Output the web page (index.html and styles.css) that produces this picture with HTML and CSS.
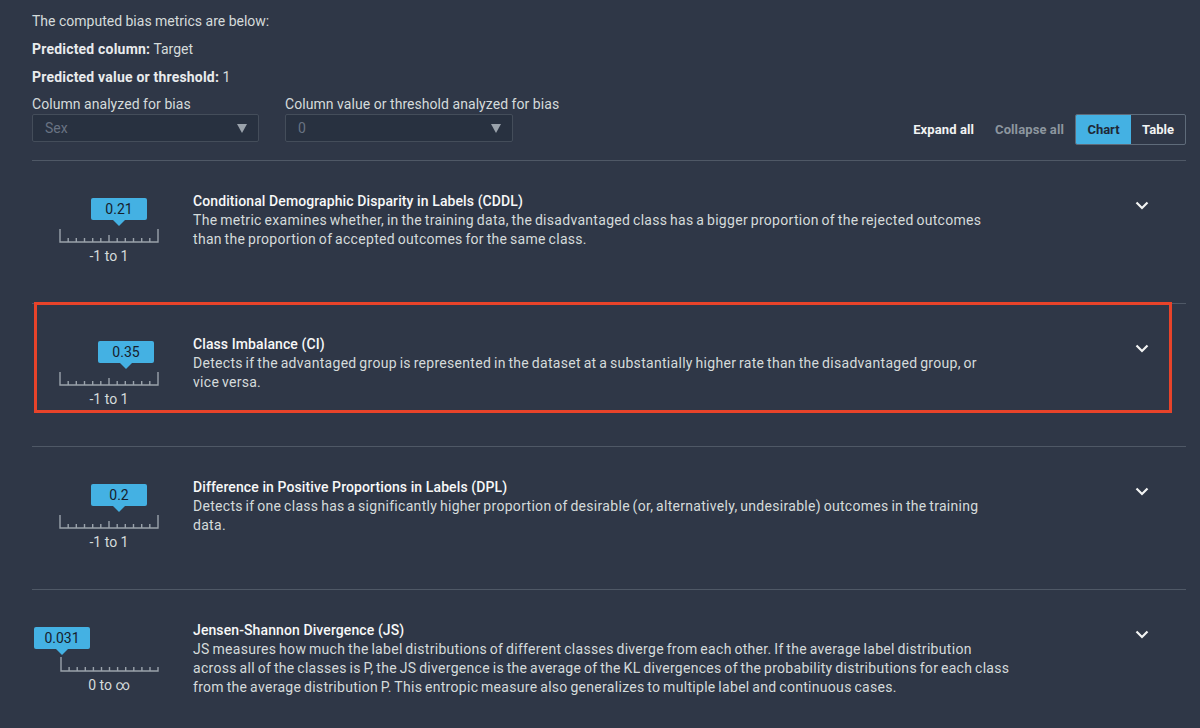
FILE: index.html
```html
<!DOCTYPE html>
<html lang="en">
<head>
<meta charset="utf-8">
<title>Bias metrics</title>
<link rel="stylesheet" href="styles.css">
</head>
<body>
<div class="page">
  <p class="intro">The computed bias metrics are below:</p>
  <p class="intro"><b>Predicted column:</b> Target</p>
  <p class="intro"><b>Predicted value or threshold:</b> 1</p>

  <div class="filters">
    <div class="field">
      <label class="field-label">Column analyzed for bias</label>
      <div class="select select-a"><span>Sex</span><span class="caret"></span></div>
    </div>
    <div class="field">
      <label class="field-label">Column value or threshold analyzed for bias</label>
      <div class="select select-b"><span>0</span><span class="caret"></span></div>
    </div>
    <div class="controls">
      <span class="link link-on">Expand all</span>
      <span class="link link-off">Collapse all</span>
      <div class="segmented">
        <span class="seg seg-active">Chart</span>
        <span class="seg">Table</span>
      </div>
    </div>
  </div>

  <div class="rows">
    <div class="row">
      <div class="chart">
        <div class="gauge">
          <div class="callout" style="left: 60px">0.21</div>
          <svg class="scale" width="100" height="15" viewBox="0 0 100 15">
            <path d="M1 1V14H99V1M9.2 10V14M17.3 10V14M25.5 10V14M33.7 10V14M41.8 10V14M50 7V14M58.2 10V14M66.3 10V14M74.5 10V14M82.7 10V14M90.8 10V14" fill="none" stroke="#9aa2ab" stroke-width="1.4"/>
          </svg>
        </div>
        <div class="range">-1 to 1</div>
      </div>
      <div class="text">
        <div class="title">Conditional Demographic Disparity in Labels (CDDL)</div>
        <div class="desc">The metric examines whether, in the training data, the disadvantaged class has a bigger proportion of the rejected outcomes than the proportion of accepted outcomes for the same class.</div>
      </div>
      <svg class="chev" width="14" height="9" viewBox="0 0 14 9"><path d="M1.5 1.5L7 7L12.5 1.5" fill="none" stroke="#f2f3f3" stroke-width="2.2"/></svg>
    </div>

    <div class="row">
      <div class="highlight"></div>
      <div class="chart">
        <div class="gauge">
          <div class="callout" style="left: 67px">0.35</div>
          <svg class="scale" width="100" height="15" viewBox="0 0 100 15">
            <path d="M1 1V14H99V1M9.2 10V14M17.3 10V14M25.5 10V14M33.7 10V14M41.8 10V14M50 7V14M58.2 10V14M66.3 10V14M74.5 10V14M82.7 10V14M90.8 10V14" fill="none" stroke="#9aa2ab" stroke-width="1.4"/>
          </svg>
        </div>
        <div class="range">-1 to 1</div>
      </div>
      <div class="text">
        <div class="title">Class Imbalance (CI)</div>
        <div class="desc">Detects if the advantaged group is represented in the dataset at a substantially higher rate than the disadvantaged group, or vice&nbsp;versa.</div>
      </div>
      <svg class="chev" width="14" height="9" viewBox="0 0 14 9"><path d="M1.5 1.5L7 7L12.5 1.5" fill="none" stroke="#f2f3f3" stroke-width="2.2"/></svg>
    </div>

    <div class="row">
      <div class="chart">
        <div class="gauge">
          <div class="callout" style="left: 60px">0.2</div>
          <svg class="scale" width="100" height="15" viewBox="0 0 100 15">
            <path d="M1 1V14H99V1M9.2 10V14M17.3 10V14M25.5 10V14M33.7 10V14M41.8 10V14M50 7V14M58.2 10V14M66.3 10V14M74.5 10V14M82.7 10V14M90.8 10V14" fill="none" stroke="#9aa2ab" stroke-width="1.4"/>
          </svg>
        </div>
        <div class="range">-1 to 1</div>
      </div>
      <div class="text">
        <div class="title">Difference in Positive Proportions in Labels (DPL)</div>
        <div class="desc">Detects if one class has a significantly higher proportion of desirable (or, alternatively, undesirable) outcomes in the training data.</div>
      </div>
      <svg class="chev" width="14" height="9" viewBox="0 0 14 9"><path d="M1.5 1.5L7 7L12.5 1.5" fill="none" stroke="#f2f3f3" stroke-width="2.2"/></svg>
    </div>

    <div class="row">
      <div class="chart">
        <div class="gauge">
          <div class="callout" style="left: 3px">0.031</div>
          <svg class="scale" width="100" height="15" viewBox="0 0 100 15">
            <path d="M2 0V14H99V10M10.1 10V14M18.2 10V14M26.3 10V14M34.4 10V14M42.5 10V14M50.5 10V14M58.6 10V14M66.7 10V14M74.8 10V14M82.9 10V14M91 10V14" fill="none" stroke="#9aa2ab" stroke-width="1.4"/>
          </svg>
        </div>
        <div class="range">0 to ∞</div>
      </div>
      <div class="text">
        <div class="title">Jensen-Shannon Divergence (JS)</div>
        <div class="desc">JS measures how much the label distributions of different classes diverge from each other. If the average label distribution across all of the classes is P, the JS divergence is the average of the KL divergences of the probability distributions for each class from the average distribution P. This entropic measure also generalizes to multiple label and continuous cases.</div>
      </div>
      <svg class="chev" width="14" height="9" viewBox="0 0 14 9"><path d="M1.5 1.5L7 7L12.5 1.5" fill="none" stroke="#f2f3f3" stroke-width="2.2"/></svg>
    </div>
  </div>
</div>
</body>
</html>
```

FILE: styles.css
```css
* { box-sizing: border-box; }
html, body {
  margin: 0;
  background: #2f3747;
  height: 100%;
  overflow: hidden;
}
body {
  font-family: Roboto, "Liberation Sans", sans-serif;
  font-size: 14px;
  color: #d5dbdb;
}
.page {
  padding: 11px 14px 0 32px;
}
.intro {
  margin: 0 0 8px;
  line-height: 20px;
}
.intro b {
  font-weight: 700;
  letter-spacing: 0.2px;
  color: #e9ebed;
}
.filters {
  display: flex;
  align-items: flex-end;
  margin-top: -1px;
}
.field {
  display: flex;
  flex-direction: column;
  margin-right: 26px;
}
.field-label {
  line-height: 20px;
  letter-spacing: 0.05px;
}
.select {
  height: 28px;
  background: #283140;
  border: 1px solid #444d5a;
  border-radius: 2px;
  display: flex;
  align-items: center;
  justify-content: space-between;
  padding: 0 11px 0 12px;
  color: #687383;
  margin-bottom: 3px;
}
.select-a { width: 227px; }
.select-b { width: 228px; }
.caret {
  width: 0;
  height: 0;
  border-left: 5px solid transparent;
  border-right: 5px solid transparent;
  border-top: 9px solid #9aa2ab;
}
.controls {
  margin-left: auto;
  display: flex;
  align-items: center;
  font-size: 13px;
}
.link {
  font-weight: 700;
  line-height: 20px;
  letter-spacing: 0.1px;
}
.link-on { color: #f2f3f3; margin-right: 21px; }
.link-off { color: #8d969f; margin-right: 11px; }
.segmented {
  display: flex;
  height: 31px;
  border: 1px solid #5f6b7a;
  border-radius: 2px;
  overflow: hidden;
}
.seg {
  display: flex;
  align-items: center;
  justify-content: center;
  width: 54px;
  font-weight: 700;
  color: #f2f3f3;
}
.seg-active {
  background: #44b1e3;
  color: #1f2836;
  width: 55px;
}
.rows {
  margin-top: 15px;
}
.row {
  position: relative;
  height: 143px;
  border-top: 1px solid #4f5866;
  display: flex;
  align-items: flex-start;
  padding-top: 31px;
}
.highlight {
  position: absolute;
  left: 2px;
  right: 14px;
  top: -2px;
  height: 111px;
  border: 3px solid #e8432a;
  pointer-events: none;
}
.chart {
  width: 154px;
  margin-right: 7px;
  display: flex;
  flex-direction: column;
  align-items: center;
  margin-top: 6px;
}
.gauge {
  position: relative;
  width: 100px;
  padding-top: 30px;
}
.scale {
  display: block;
}
.callout {
  position: absolute;
  top: 0;
  transform: translateX(-50%);
  min-width: 56px;
  height: 22px;
  padding: 0 8px;
  background: #44b1e3;
  color: #16202c;
  border-radius: 2px;
  font-size: 14px;
  line-height: 22px;
  text-align: center;
}
.callout::after {
  content: "";
  position: absolute;
  left: 50%;
  bottom: -6px;
  margin-left: -6px;
  border-left: 6px solid transparent;
  border-right: 6px solid transparent;
  border-top: 6px solid #44b1e3;
}
.range {
  margin-top: 4px;
  line-height: 18px;
  color: #d5dbdb;
}
.text {
  width: 818px;
}
.title {
  line-height: 19px;
  color: #f7f8f8;
  font-weight: 500;
  letter-spacing: 0.1px;
}
.desc {
  line-height: 19px;
  color: #d5dbdb;
  letter-spacing: 0.3px;
  word-spacing: -1px;
}
.chev {
  margin-left: auto;
  margin-right: 37px;
  margin-top: 9px;
}
```
